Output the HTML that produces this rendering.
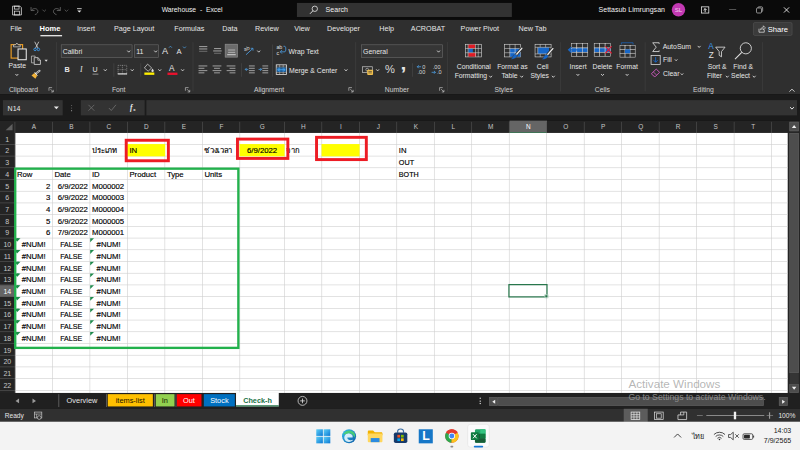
<!DOCTYPE html>
<html lang="en"><head><meta charset="utf-8"><title>Warehouse - Excel</title>
<style>
html,body{margin:0;padding:0;background:#0a0a0a;}
body{width:800px;height:450px;overflow:hidden;position:relative;}
#app{position:absolute;left:0;top:0;width:1368px;height:772px;transform:scale(0.585652);transform-origin:0 0;
 font-family:"Liberation Sans","Noto Sans CJK JP",sans-serif;font-size:12px;color:#e6e6e6;overflow:hidden;background:#0a0a0a;}
#app div,#app svg,#app span.a{position:absolute;box-sizing:border-box;}
#app svg{overflow:visible;}
.t{white-space:nowrap;}
.c{white-space:nowrap;color:#000;font-size:13.2px;height:20px;line-height:20px;-webkit-text-stroke:0.25px #000;}
</style></head>
<body>
<div id="app">
<div style="left:0px;top:0px;width:1366px;height:34px;background:#0a0a0a;"></div>
<svg style="left:20px;top:8.5px;" width="18" height="18" viewBox="0 0 18 18"><path d="M1.5 1.5h12.5l2.5 2.5v12.5h-15z" fill="none" stroke="#e8e8e8" stroke-width="1.3"/><rect x="4.5" y="1.5" width="8" height="5" fill="none" stroke="#e8e8e8" stroke-width="1.2"/><rect x="4.5" y="10" width="9" height="6.5" fill="none" stroke="#e8e8e8" stroke-width="1.2"/></svg>
<svg style="left:50px;top:9.5px;" width="18" height="16" viewBox="0 0 18 16"><path d="M3 2v6h6" fill="none" stroke="#6a6a6a" stroke-width="1.4"/><path d="M3.5 8c2-4 9-5 11 0 1 3-1 6-5 7" fill="none" stroke="#6a6a6a" stroke-width="1.4"/></svg>
<svg style="left:72px;top:15.5px;" width="8" height="5" viewBox="0 0 8 5"><path d="M0.5 0.5l3 3 3-3" fill="none" stroke="#6a6a6a" stroke-width="1.2"/></svg>
<svg style="left:88px;top:9.5px;" width="18" height="16" viewBox="0 0 18 16"><path d="M15 2v6h-6" fill="none" stroke="#6a6a6a" stroke-width="1.4"/><path d="M14.5 8c-2-4-9-5-11 0-1 3 1 6 5 7" fill="none" stroke="#6a6a6a" stroke-width="1.4"/></svg>
<svg style="left:110px;top:15.5px;" width="8" height="5" viewBox="0 0 8 5"><path d="M0.5 0.5l3 3 3-3" fill="none" stroke="#6a6a6a" stroke-width="1.2"/></svg>
<svg style="left:131px;top:14px;" width="9" height="9" viewBox="0 0 9 9"><path d="M0.5 0.8h8" stroke="#e8e8e8" stroke-width="1.4"/><path d="M1 3.8l3.5 3.6L8 3.8z" fill="#e8e8e8"/></svg>
<div class="t" style="left:276px;top:6px;height:20px;line-height:20px;font-size:11.6px;color:#f0f0f0;">Warehouse&nbsp; -&nbsp; Excel</div>
<div style="left:507px;top:5px;width:367px;height:24px;background:#323232;"></div>
<svg style="left:528px;top:9px;" width="16" height="16" viewBox="0 0 16 16"><circle cx="9.5" cy="6" r="4.6" fill="none" stroke="#f0f0f0" stroke-width="1.3"/><path d="M6.3 9.4l-5 5.2" stroke="#f0f0f0" stroke-width="1.5"/></svg>
<div class="t" style="left:556px;top:6.5px;height:20px;line-height:20px;font-size:12px;color:#f0f0f0;">Search</div>
<div class="t" style="left:1022px;top:6px;height:20px;line-height:20px;font-size:12px;color:#f0f0f0;">Settasub Limrungsan</div>
<div style="left:1147px;top:5px;width:23px;height:23px;background:#c239b3;border-radius:50%;"></div>
<div class="t" style="left:1147px;top:6.5px;height:20px;line-height:20px;font-size:10.5px;color:#f0cfea;width:23px;text-align:center;">SL</div>
<svg style="left:1197px;top:10.5px;" width="14" height="12" viewBox="0 0 14 12"><rect x="0.7" y="0.7" width="12.6" height="10.6" fill="none" stroke="#f0f0f0" stroke-width="1.3"/><path d="M7 9.8v-6M4.3 6.3L7 3.6l2.7 2.7" fill="none" stroke="#f0f0f0" stroke-width="1.6"/></svg>
<div style="left:1245px;top:16px;width:12px;height:1.3px;background:#8a8a8a;"></div>
<svg style="left:1291px;top:10.5px;" width="12" height="12" viewBox="0 0 12 12"><rect x="0.7" y="2.6" width="8.6" height="8.6" rx="1.8" fill="none" stroke="#b8b8b8" stroke-width="1.3"/><path d="M3 2.6v-0.3c0-.9.7-1.6 1.6-1.6h5c.9 0 1.6.7 1.6 1.6v5c0 .9-.7 1.6-1.6 1.6h-.3" fill="none" stroke="#b8b8b8" stroke-width="1.3"/></svg>
<svg style="left:1338px;top:11.5px;" width="10" height="10" viewBox="0 0 10 10"><path d="M0.6 0.6l8.8 8.8M9.4 0.6L0.6 9.4" stroke="#f0f0f0" stroke-width="1.5"/></svg>
<div style="left:0px;top:34px;width:1366px;height:127px;background:#2f2f2f;"></div>
<div class="t" style="left:17.5px;top:39px;height:20px;line-height:20px;font-size:12.3px;color:#e6e6e6;">File</div>
<div class="t" style="left:67.5px;top:39px;height:20px;line-height:20px;font-size:12.8px;color:#ffffff;font-weight:bold;">Home</div>
<div class="t" style="left:131.5px;top:39px;height:20px;line-height:20px;font-size:12.3px;color:#e6e6e6;">Insert</div>
<div class="t" style="left:194.5px;top:39px;height:20px;line-height:20px;font-size:12.3px;color:#e6e6e6;">Page Layout</div>
<div class="t" style="left:297.5px;top:39px;height:20px;line-height:20px;font-size:12.3px;color:#e6e6e6;">Formulas</div>
<div class="t" style="left:379.5px;top:39px;height:20px;line-height:20px;font-size:12.3px;color:#e6e6e6;">Data</div>
<div class="t" style="left:435.5px;top:39px;height:20px;line-height:20px;font-size:12.3px;color:#e6e6e6;">Review</div>
<div class="t" style="left:502.5px;top:39px;height:20px;line-height:20px;font-size:12.3px;color:#e6e6e6;">View</div>
<div class="t" style="left:558.5px;top:39px;height:20px;line-height:20px;font-size:12.3px;color:#e6e6e6;">Developer</div>
<div class="t" style="left:647.5px;top:39px;height:20px;line-height:20px;font-size:12.3px;color:#e6e6e6;">Help</div>
<div class="t" style="left:701.5px;top:39px;height:20px;line-height:20px;font-size:12.3px;color:#e6e6e6;">ACROBAT</div>
<div class="t" style="left:786.5px;top:39px;height:20px;line-height:20px;font-size:12.3px;color:#e6e6e6;">Power Pivot</div>
<div class="t" style="left:885.5px;top:39px;height:20px;line-height:20px;font-size:12.3px;color:#e6e6e6;">New Tab</div>
<div style="left:68.5px;top:59.5px;width:37.5px;height:2.5px;background:#ffffff;"></div>
<div style="left:1286px;top:38px;width:67px;height:23px;background:#3b3b3b;border:1px solid #555;border-radius:3px;"></div>
<svg style="left:1295px;top:43px;" width="13" height="13" viewBox="0 0 13 13"><path d="M1 6v6h9V8" fill="none" stroke="#e8e8e8" stroke-width="1.2"/><path d="M3.5 8c.5-3 2.5-4.5 5-4.5V1l3.5 3.7-3.5 3.6V6C6.5 6 4.8 6.5 3.5 8z" fill="none" stroke="#e8e8e8" stroke-width="1.1"/></svg>
<div class="t" style="left:1311px;top:39.5px;height:20px;line-height:20px;font-size:13px;color:#ffffff;">Share</div>
<div style="left:0px;top:161px;width:1366px;height:45px;background:#1b1b1b;"></div>
<div style="left:5px;top:171px;width:102px;height:26px;background:#333333;"></div>
<div class="t" style="left:13px;top:174.5px;height:20px;line-height:20px;font-size:12px;color:#e6e6e6;">N14</div>
<svg style="left:92px;top:182px;" width="9" height="6" viewBox="0 0 9 6"><path d="M0 0h8.5L4.25 4.6z" fill="#e8e8e8"/></svg>
<div style="left:121.7px;top:179.5px;width:1.7px;height:1.7px;background:#d8d8d8;"></div>
<div style="left:121.7px;top:183.7px;width:1.7px;height:1.7px;background:#d8d8d8;"></div>
<div style="left:121.7px;top:188px;width:1.7px;height:1.7px;background:#d8d8d8;"></div>
<div style="left:137.5px;top:171px;width:109px;height:26px;background:#333333;"></div>
<svg style="left:150px;top:178px;" width="12" height="12" viewBox="0 0 12 12"><path d="M1 1l10 10M11 1L1 11" stroke="#6d6d6d" stroke-width="1.4"/></svg>
<svg style="left:185px;top:178px;" width="14" height="12" viewBox="0 0 14 12"><path d="M1 6.5l4 4.2L13 1" fill="none" stroke="#6d6d6d" stroke-width="1.5"/></svg>
<div class="t" style="left:222px;top:173.5px;height:20px;line-height:20px;font-size:12.5px;color:#f0f0f0;font-family:&quot;Liberation Serif&quot;,serif;font-weight:bold;"><i>f</i></div>
<div class="t" style="left:227.5px;top:177px;height:20px;line-height:20px;font-size:7px;color:#f0f0f0;font-weight:bold;">x</div>
<div style="left:249.7px;top:171px;width:1111.5px;height:26px;background:#333333;"></div>
<svg style="left:1348px;top:181.5px;" width="9" height="6" viewBox="0 0 9 6"><path d="M1 1l3.3 3.3L7.6 1" fill="none" stroke="#f0f0f0" stroke-width="1.7"/></svg>
<svg style="left:18px;top:72px;" width="30" height="32" viewBox="0 0 30 32"><rect x="1" y="4.2" width="19.6" height="23" fill="none" stroke="#f2a024" stroke-width="1.9"/><path d="M5 8V4.6h3.4L10.8 1.4l2.4 3.2h3.4V8z" fill="#2f2f2f" stroke="#cfcfcf" stroke-width="1.3"/><rect x="12.8" y="11.6" width="14" height="18.4" fill="#2f2f2f" stroke="#f2f2f2" stroke-width="1.7"/></svg>
<div class="t" style="left:-30.5px;top:102px;height:20px;line-height:20px;font-size:11.6px;color:#e6e6e6;width:120px;text-align:center;">Paste</div>
<svg style="left:26.0px;top:126.46px;" width="5.6" height="4.08" viewBox="0 0 5.6 4.08"><path d="M0.4 0.4l2.4 2.68 2.4 -2.68" fill="none" stroke="#dcdcdc" stroke-width="1.5"/></svg>
<svg style="left:56.5px;top:71px;" width="12" height="17" viewBox="0 0 12 17"><path d="M2.3 0.3L7.8 11M9.2 0.3L3.7 11" stroke="#e6e6e6" stroke-width="1.25"/><circle cx="2.9" cy="13.4" r="2.1" fill="none" stroke="#3b9cf0" stroke-width="1.5"/><circle cx="8.6" cy="13.4" r="2.1" fill="none" stroke="#3b9cf0" stroke-width="1.5"/></svg>
<svg style="left:53px;top:95px;" width="17" height="16" viewBox="0 0 17 16"><path d="M7 2.2V0.7H0.7v11.6h4" fill="none" stroke="#cfcfcf" stroke-width="1.2"/><path d="M5.4 3.4h6.4l4.2 4.2v7.4H5.4z" fill="#2f2f2f" stroke="#e6e6e6" stroke-width="1.3"/><path d="M11.6 3.6v4.2h4.2" fill="none" stroke="#e6e6e6" stroke-width="1.1"/></svg>
<svg style="left:76px;top:102.3px;" width="6" height="4" viewBox="0 0 6 4"><path d="M0 0h5.6L2.8 3.4z" fill="#e0e0e0"/></svg>
<svg style="left:53px;top:119px;" width="17" height="17" viewBox="0 0 17 17"><path d="M8.4 6.6L14.6 2" stroke="#e0e0e0" stroke-width="3.2" stroke-linecap="round"/><path d="M8.8 6.2L14.2 2.3" stroke="#2f2f2f" stroke-width="1.1" stroke-linecap="round"/><path d="M6.2 4.6l4.6 5.6" stroke="#f2f2f2" stroke-width="1.6"/><path d="M5.6 5.6L0.8 9.8l6.6 5.6 3-5.2z" fill="#f2b33a"/></svg>
<div class="t" style="left:-20px;top:143px;height:20px;line-height:20px;font-size:11.6px;color:#cfcfcf;width:120px;text-align:center;">Clipboard</div>
<svg style="left:82.5px;top:149.0px;" width="9" height="9" viewBox="0 0 9 9"><path d="M0.6 6V0.6H6" fill="none" stroke="#c8c8c8" stroke-width="1.1"/><path d="M3.2 3.2l4.6 4.6M8 4.4V8H4.4" fill="none" stroke="#c8c8c8" stroke-width="1.1"/></svg>
<div style="left:95.5px;top:72px;width:1px;height:84px;background:#434343;"></div>
<div style="left:103.7px;top:76px;width:122.5px;height:22.5px;background:#363636;border:1px solid #6a6a6a;"></div>
<div class="t" style="left:107px;top:78px;height:20px;line-height:20px;font-size:11.8px;color:#e6e6e6;">Calibri</div>
<svg style="left:217.0px;top:85.96px;" width="5.6" height="4.08" viewBox="0 0 5.6 4.08"><path d="M0.4 0.4l2.4 2.68 2.4 -2.68" fill="none" stroke="#dcdcdc" stroke-width="1.5"/></svg>
<div style="left:229.2px;top:76px;width:42px;height:22.5px;background:#363636;border:1px solid #6a6a6a;"></div>
<div class="t" style="left:232.6px;top:78px;height:20px;line-height:20px;font-size:12px;color:#e6e6e6;">11</div>
<svg style="left:262.7px;top:85.96px;" width="5.6" height="4.08" viewBox="0 0 5.6 4.08"><path d="M0.4 0.4l2.4 2.68 2.4 -2.68" fill="none" stroke="#dcdcdc" stroke-width="1.5"/></svg>
<div class="t" style="left:276.5px;top:77px;height:20px;line-height:20px;font-size:15.5px;color:#e6e6e6;">A</div>
<svg style="left:288px;top:78px;" width="6" height="4" viewBox="0 0 6 4"><path d="M0.5 3.5L3 0.8l2.5 2.7" fill="none" stroke="#4ea3ea" stroke-width="1.2"/></svg>
<div class="t" style="left:301.5px;top:78px;height:20px;line-height:20px;font-size:13px;color:#e6e6e6;">A</div>
<svg style="left:311.5px;top:79px;" width="6" height="4" viewBox="0 0 6 4"><path d="M0.5 0.5L3 3.2l2.5-2.7" fill="none" stroke="#4ea3ea" stroke-width="1.2"/></svg>
<div class="t" style="left:110px;top:109px;height:20px;line-height:20px;font-size:12.5px;color:#e6e6e6;font-weight:bold;">B</div>
<div class="t" style="left:136.5px;top:109px;height:20px;line-height:20px;font-size:13px;color:#e6e6e6;font-family:&quot;Liberation Serif&quot;,serif;"><i>I</i></div>
<div class="t" style="left:158px;top:108.5px;height:20px;line-height:20px;font-size:12px;color:#e6e6e6;">U</div>
<div style="left:157.5px;top:126px;width:10px;height:1.2px;background:#d8d8d8;"></div>
<svg style="left:177.29999999999998px;top:118.46px;" width="5.6" height="4.08" viewBox="0 0 5.6 4.08"><path d="M0.4 0.4l2.4 2.68 2.4 -2.68" fill="none" stroke="#dcdcdc" stroke-width="1.5"/></svg>
<div style="left:194.2px;top:108px;width:1px;height:23px;background:#4a4a4a;"></div>
<svg style="left:200.5px;top:110.5px;" width="16" height="16" viewBox="0 0 16 16"><rect x="0.6" y="0.6" width="14.8" height="14.8" fill="none" stroke="#9a9a9a" stroke-width="1" stroke-dasharray="2 1.2"/><path d="M0 8h16M8 0v16" stroke="#9a9a9a" stroke-width="1" stroke-dasharray="2 1.2"/><path d="M0 15.2h16" stroke="#f0f0f0" stroke-width="1.8"/></svg>
<svg style="left:223.39999999999998px;top:118.46px;" width="5.6" height="4.08" viewBox="0 0 5.6 4.08"><path d="M0.4 0.4l2.4 2.68 2.4 -2.68" fill="none" stroke="#dcdcdc" stroke-width="1.5"/></svg>
<div style="left:240px;top:108px;width:1px;height:23px;background:#4a4a4a;"></div>
<svg style="left:245px;top:107px;" width="20" height="22" viewBox="0 0 20 22"><path d="M7 2.5l7 6.5-6 5.5-6.5-5.5z" fill="none" stroke="#e0e0e0" stroke-width="1.2"/><path d="M15.5 10c1 1.5 2 2.8 2 3.8a2 2 0 0 1-4 0c0-1 1-2.3 2-3.8z" fill="#e0e0e0"/><rect x="1.5" y="16.8" width="17" height="4" fill="#ffef00"/></svg>
<svg style="left:269.5px;top:118.46px;" width="5.6" height="4.08" viewBox="0 0 5.6 4.08"><path d="M0.4 0.4l2.4 2.68 2.4 -2.68" fill="none" stroke="#dcdcdc" stroke-width="1.5"/></svg>
<div class="t" style="left:288.5px;top:106px;height:20px;line-height:20px;font-size:14px;color:#e6e6e6;">A</div>
<div style="left:285.5px;top:123.8px;width:17.5px;height:4px;background:#e8112d;"></div>
<svg style="left:308.8px;top:118.46px;" width="5.6" height="4.08" viewBox="0 0 5.6 4.08"><path d="M0.4 0.4l2.4 2.68 2.4 -2.68" fill="none" stroke="#dcdcdc" stroke-width="1.5"/></svg>
<div class="t" style="left:142.7px;top:143px;height:20px;line-height:20px;font-size:11.6px;color:#cfcfcf;width:120px;text-align:center;">Font</div>
<svg style="left:315.5px;top:149.0px;" width="9" height="9" viewBox="0 0 9 9"><path d="M0.6 6V0.6H6" fill="none" stroke="#c8c8c8" stroke-width="1.1"/><path d="M3.2 3.2l4.6 4.6M8 4.4V8H4.4" fill="none" stroke="#c8c8c8" stroke-width="1.1"/></svg>
<div style="left:328.7px;top:72px;width:1px;height:84px;background:#434343;"></div>
<div style="left:384.2px;top:74.7px;width:22.2px;height:23.5px;background:#6b6b6b;border:1px solid #8a8a8a;"></div>
<svg style="left:339.5px;top:78.5px;" width="15" height="16" viewBox="0 0 15 16"><path d="M0 0.6h14M0 4.6h14" stroke="#d8d8d8" stroke-width="1.2"/><path d="M0 8.6h14" stroke="#8a8a8a" stroke-width="1.2"/></svg>
<svg style="left:363.5px;top:79.5px;" width="15" height="16" viewBox="0 0 15 16"><path d="M1.5 3h12M0 7h14.5" stroke="#d8d8d8" stroke-width="1.2"/><path d="M1.5 11h12" stroke="#8a8a8a" stroke-width="1.2"/></svg>
<svg style="left:388px;top:78px;" width="15" height="16" viewBox="0 0 15 16"><path d="M1.5 7.4h12M1.5 11.4h12" stroke="#d0d0d0" stroke-width="1.2"/><path d="M0 15.4h14.5" stroke="#f0f0f0" stroke-width="1.3"/></svg>
<svg style="left:417px;top:77px;" width="17" height="18" viewBox="0 0 17 18"><text x="0" y="9" font-size="9" fill="#d8d8d8" font-family="Liberation Sans,sans-serif" transform="rotate(-20 4 8)">ab</text><path d="M3 16.5L14.5 6" stroke="#4ea3ea" stroke-width="1.4"/><path d="M11 5.5h4v4" fill="none" stroke="#4ea3ea" stroke-width="1.3"/></svg>
<svg style="left:439.0px;top:86.46px;" width="5.6" height="4.08" viewBox="0 0 5.6 4.08"><path d="M0.4 0.4l2.4 2.68 2.4 -2.68" fill="none" stroke="#dcdcdc" stroke-width="1.5"/></svg>
<div style="left:465.3px;top:76px;width:1px;height:55px;background:#4a4a4a;"></div>
<svg style="left:472px;top:76px;" width="17" height="20" viewBox="0 0 17 20"><text x="0" y="8" font-size="9" fill="#e0e0e0" font-family="Liberation Sans,sans-serif">ab</text><text x="0" y="17.5" font-size="9" fill="#e0e0e0" font-family="Liberation Sans,sans-serif">c</text><path d="M12 3h2.5c2 0 2 9.5 0 9.5H7" fill="none" stroke="#4ea3ea" stroke-width="1.3"/><path d="M9.5 9.5l-3 3 3 3" fill="none" stroke="#4ea3ea" stroke-width="1.3"/></svg>
<div class="t" style="left:492.5px;top:78px;height:20px;line-height:20px;font-size:11.6px;color:#e6e6e6;">Wrap Text</div>
<svg style="left:339px;top:111.7px;" width="15" height="13" viewBox="0 0 15 13"><path d="M0 0.6h15M0 4.6h10M0 8.6h15M0 12.4h10" stroke="#d0d0d0" stroke-width="1.2"/></svg>
<svg style="left:363px;top:111.7px;" width="15" height="13" viewBox="0 0 15 13"><path d="M0 0.6h15M2.5 4.6h10M0 8.6h15M2.5 12.4h10" stroke="#d0d0d0" stroke-width="1.2"/></svg>
<svg style="left:387px;top:111.7px;" width="15" height="13" viewBox="0 0 15 13"><path d="M0 0.6h15M5 4.6h10M0 8.6h15M5 12.4h10" stroke="#d0d0d0" stroke-width="1.2"/></svg>
<div style="left:412px;top:108px;width:1px;height:23px;background:#4a4a4a;"></div>
<svg style="left:417.5px;top:111.7px;" width="17" height="13" viewBox="0 0 17 13"><path d="M7 0.6h10M7 4.6h10M7 8.6h10M7 12.4h10" stroke="#d0d0d0" stroke-width="1.2"/><path d="M6 6.5H0.8M3.2 4L0.8 6.5l2.4 2.5" fill="none" stroke="#4ea3ea" stroke-width="1.3"/></svg>
<svg style="left:441px;top:111.7px;" width="17" height="13" viewBox="0 0 17 13"><path d="M7 0.6h10M7 4.6h10M7 8.6h10M7 12.4h10" stroke="#d0d0d0" stroke-width="1.2"/><path d="M0.5 6.5h5.3M3.4 4l2.4 2.5-2.4 2.5" fill="none" stroke="#4ea3ea" stroke-width="1.3"/></svg>
<svg style="left:471px;top:109.5px;" width="19" height="18" viewBox="0 0 19 18"><rect x="0.7" y="0.7" width="17.6" height="16.6" fill="none" stroke="#e0e0e0" stroke-width="1.4"/><path d="M0.7 4.6h17.6M0.7 13.4h17.6M6.5 0.7v3.9M12.5 0.7v3.9M6.5 13.4v3.9M12.5 13.4v3.9" stroke="#c8c8c8" stroke-width="1"/><rect x="1.4" y="5.2" width="16.2" height="7.6" fill="#1f5e98"/><path d="M3 9h13M5.5 6.8L3.2 9l2.3 2.2M13.5 6.8l2.3 2.2-2.3 2.2" fill="none" stroke="#4eb0ff" stroke-width="1.2"/><path d="M6.5 5.2v7.6M12.5 5.2v7.6" stroke="#4eb0ff" stroke-width="0.9"/></svg>
<div class="t" style="left:493.5px;top:109.5px;height:20px;line-height:20px;font-size:11.7px;color:#e6e6e6;">Merge &amp; Center</div>
<svg style="left:587.6px;top:118.46px;" width="5.6" height="4.08" viewBox="0 0 5.6 4.08"><path d="M0.4 0.4l2.4 2.68 2.4 -2.68" fill="none" stroke="#dcdcdc" stroke-width="1.5"/></svg>
<div class="t" style="left:399.5px;top:143px;height:20px;line-height:20px;font-size:11.6px;color:#cfcfcf;width:120px;text-align:center;">Alignment</div>
<svg style="left:595.3px;top:149.0px;" width="9" height="9" viewBox="0 0 9 9"><path d="M0.6 6V0.6H6" fill="none" stroke="#c8c8c8" stroke-width="1.1"/><path d="M3.2 3.2l4.6 4.6M8 4.4V8H4.4" fill="none" stroke="#c8c8c8" stroke-width="1.1"/></svg>
<div style="left:607px;top:72px;width:1px;height:84px;background:#434343;"></div>
<div style="left:616.8px;top:76px;width:139.6px;height:22.5px;background:#363636;border:1px solid #6a6a6a;"></div>
<div class="t" style="left:620px;top:78px;height:20px;line-height:20px;font-size:11.8px;color:#e6e6e6;">General</div>
<svg style="left:746.4000000000001px;top:85.96px;" width="5.6" height="4.08" viewBox="0 0 5.6 4.08"><path d="M0.4 0.4l2.4 2.68 2.4 -2.68" fill="none" stroke="#dcdcdc" stroke-width="1.5"/></svg>
<svg style="left:617.5px;top:112px;" width="21" height="17" viewBox="0 0 21 17"><rect x="0.7" y="2" width="17" height="10" fill="none" stroke="#c8c8c8" stroke-width="1.2"/><circle cx="9" cy="7" r="2.4" fill="none" stroke="#c8c8c8" stroke-width="1.1"/><rect x="9" y="7" width="10" height="9" rx="1.5" fill="#f2c14e"/><path d="M11 10h6M11 12.5h6" stroke="#2f2f2f" stroke-width="1"/></svg>
<svg style="left:641.8000000000001px;top:118.46px;" width="5.6" height="4.08" viewBox="0 0 5.6 4.08"><path d="M0.4 0.4l2.4 2.68 2.4 -2.68" fill="none" stroke="#dcdcdc" stroke-width="1.5"/></svg>
<div class="t" style="left:657.5px;top:108.5px;height:20px;line-height:20px;font-size:19px;color:#dadada;">%</div>
<div class="t" style="left:684px;top:116.5px;height:20px;line-height:20px;font-size:36px;color:#e6e6e6;font-weight:bold;">&#x2019;</div>
<div style="left:704.3px;top:108px;width:1px;height:23px;background:#4a4a4a;"></div>
<svg style="left:711px;top:109.5px;" width="20" height="18" viewBox="0 0 20 18"><path d="M8 4H1.5M4 1.5L1.5 4 4 6.5" fill="none" stroke="#4ea3ea" stroke-width="1.3"/><text x="10" y="8" font-size="9.5" fill="#d8d8d8" font-family="Liberation Sans,sans-serif">0</text><text x="2" y="17" font-size="9.5" fill="#d8d8d8" font-family="Liberation Sans,sans-serif">.00</text></svg>
<svg style="left:736px;top:109.5px;" width="20" height="18" viewBox="0 0 20 18"><text x="3" y="8" font-size="9.5" fill="#d8d8d8" font-family="Liberation Sans,sans-serif">.00</text><path d="M1 13.5h6.5M5 11l2.5 2.5L5 16" fill="none" stroke="#4ea3ea" stroke-width="1.3"/><text x="10" y="17" font-size="9.5" fill="#d8d8d8" font-family="Liberation Sans,sans-serif">.0</text></svg>
<div class="t" style="left:617.7px;top:143px;height:20px;line-height:20px;font-size:11.6px;color:#cfcfcf;width:120px;text-align:center;">Number</div>
<svg style="left:750.2px;top:149.0px;" width="9" height="9" viewBox="0 0 9 9"><path d="M0.6 6V0.6H6" fill="none" stroke="#c8c8c8" stroke-width="1.1"/><path d="M3.2 3.2l4.6 4.6M8 4.4V8H4.4" fill="none" stroke="#c8c8c8" stroke-width="1.1"/></svg>
<div style="left:764.1px;top:72px;width:1px;height:84px;background:#434343;"></div>
<svg style="left:794px;top:74.7px;" width="29" height="23" viewBox="0 0 29 23"><rect x="0.6" y="0.6" width="27.4" height="21.6" fill="#2f2f2f" stroke="#dcdcdc" stroke-width="1"/><rect x="5.6" y="1.2" width="11.8" height="6.2" fill="#e01b24"/><rect x="5.6" y="8.2" width="7.8" height="6.4" fill="#1767c8"/><rect x="5.6" y="15.4" width="13.4" height="6.2" fill="#e01b24"/><path d="M0.6 7.8h27.4M0.6 15h27.4M5.2 0.6v21.6M18 0.6v21.6M22.6 0.6v21.6" stroke="#dcdcdc" stroke-width="0.9"/></svg>
<div class="t" style="left:749px;top:102.5px;height:20px;line-height:20px;font-size:11.6px;color:#e6e6e6;width:120px;text-align:center;">Conditional</div>
<div class="t" style="left:744px;top:119.30000000000001px;height:20px;line-height:20px;font-size:11.6px;color:#e6e6e6;width:120px;text-align:center;">Formatting</div>
<svg style="left:835.2px;top:129.46px;" width="5.6" height="4.08" viewBox="0 0 5.6 4.08"><path d="M0.4 0.4l2.4 2.68 2.4 -2.68" fill="none" stroke="#dcdcdc" stroke-width="1.5"/></svg>
<svg style="left:861px;top:74.7px;" width="31" height="29" viewBox="0 0 31 29"><rect x="0.6" y="0.6" width="27.4" height="21.6" fill="#2f2f2f" stroke="#dcdcdc" stroke-width="1"/><rect x="9.6" y="8" width="18" height="13.8" fill="#1767c8"/><path d="M0.6 7.8h27.4M0.6 15h27.4M9.4 0.6v21.6M18.6 0.6v21.6" stroke="#dcdcdc" stroke-width="0.9"/><path d="M30 7.5L20.5 18.5" stroke="#2f2f2f" stroke-width="5"/><path d="M30 7.5L20.5 18.5" stroke="#ececec" stroke-width="2.3" stroke-linecap="round"/><path d="M20.5 18.5m2 1.4c-1 4-5.6 6.6-11.5 6.2 2.8-1.6 3-4 4.2-6.2 1.5-2.4 5.2-3 7.3 0z" fill="#1767c8" stroke="#2f2f2f" stroke-width="0.7"/></svg>
<div class="t" style="left:815px;top:102.5px;height:20px;line-height:20px;font-size:11.6px;color:#e6e6e6;width:120px;text-align:center;">Format as</div>
<div class="t" style="left:810px;top:119.30000000000001px;height:20px;line-height:20px;font-size:11.6px;color:#e6e6e6;width:120px;text-align:center;">Table</div>
<svg style="left:887.7px;top:129.46px;" width="5.6" height="4.08" viewBox="0 0 5.6 4.08"><path d="M0.4 0.4l2.4 2.68 2.4 -2.68" fill="none" stroke="#dcdcdc" stroke-width="1.5"/></svg>
<svg style="left:912.7px;top:74.7px;" width="32" height="29" viewBox="0 0 32 29"><rect x="0.6" y="0.6" width="27.4" height="21.6" fill="#2f2f2f" stroke="#dcdcdc" stroke-width="1"/><rect x="5.4" y="6" width="19" height="11" fill="#1767c8"/><path d="M0.6 5.8h27.4M0.6 17h27.4M9.4 0.6v5.2M18.6 0.6v5.2M9.4 17v5.2M18.6 17v5.2M5.2 5.8v11.2" stroke="#dcdcdc" stroke-width="0.9"/><path d="M31 8L21.5 19" stroke="#2f2f2f" stroke-width="5"/><path d="M31 8L21.5 19" stroke="#ececec" stroke-width="2.3" stroke-linecap="round"/><path d="M21.5 19m2 1.4c-1 4-5.6 6.6-11.5 6.2 2.8-1.6 3-4 4.2-6.2 1.5-2.4 5.2-3 7.3 0z" fill="#1767c8" stroke="#2f2f2f" stroke-width="0.7"/></svg>
<div class="t" style="left:866.5px;top:102.5px;height:20px;line-height:20px;font-size:11.6px;color:#e6e6e6;width:120px;text-align:center;">Cell</div>
<div class="t" style="left:861.5px;top:119.30000000000001px;height:20px;line-height:20px;font-size:11.6px;color:#e6e6e6;width:120px;text-align:center;">Styles</div>
<svg style="left:942.2px;top:129.46px;" width="5.6" height="4.08" viewBox="0 0 5.6 4.08"><path d="M0.4 0.4l2.4 2.68 2.4 -2.68" fill="none" stroke="#dcdcdc" stroke-width="1.5"/></svg>
<div class="t" style="left:800px;top:143px;height:20px;line-height:20px;font-size:11.6px;color:#cfcfcf;width:120px;text-align:center;">Styles</div>
<div style="left:957px;top:72px;width:1px;height:84px;background:#434343;"></div>
<svg style="left:975px;top:74px;" width="29" height="23" viewBox="0 0 29 23"><rect x="0.6" y="0.6" width="9.3" height="7.3" fill="#2f2f2f" stroke="#d8d8d8" stroke-width="0.9"/><rect x="9.9" y="0.6" width="9.3" height="7.3" fill="#2f2f2f" stroke="#d8d8d8" stroke-width="0.9"/><rect x="19.3" y="0.6" width="9.3" height="7.3" fill="#2f2f2f" stroke="#d8d8d8" stroke-width="0.9"/><rect x="0.6" y="7.9" width="9.3" height="7.3" fill="#1767c8" stroke="#d8d8d8" stroke-width="0.9"/><rect x="9.9" y="7.9" width="9.3" height="7.3" fill="#1767c8" stroke="#d8d8d8" stroke-width="0.9"/><rect x="19.3" y="7.9" width="9.3" height="7.3" fill="#1767c8" stroke="#d8d8d8" stroke-width="0.9"/><rect x="0.6" y="15.3" width="9.3" height="7.3" fill="#2f2f2f" stroke="#d8d8d8" stroke-width="0.9"/><rect x="9.9" y="15.3" width="9.3" height="7.3" fill="#2f2f2f" stroke="#d8d8d8" stroke-width="0.9"/><rect x="19.3" y="15.3" width="9.3" height="7.3" fill="#2f2f2f" stroke="#d8d8d8" stroke-width="0.9"/><path d="M14 11H-4M1 6.5L-4 11l5 4.5" fill="none" stroke="#1767c8" stroke-width="2.2"/></svg>
<svg style="left:1014px;top:74px;" width="29" height="23" viewBox="0 0 29 23"><rect x="0.6" y="0.6" width="9.3" height="7.3" fill="#2f2f2f" stroke="#d8d8d8" stroke-width="0.9"/><rect x="9.9" y="0.6" width="9.3" height="7.3" fill="#2f2f2f" stroke="#d8d8d8" stroke-width="0.9"/><rect x="19.3" y="0.6" width="9.3" height="7.3" fill="#2f2f2f" stroke="#d8d8d8" stroke-width="0.9"/><rect x="0.6" y="7.9" width="9.3" height="7.3" fill="#1767c8" stroke="#d8d8d8" stroke-width="0.9"/><rect x="9.9" y="7.9" width="9.3" height="7.3" fill="#1767c8" stroke="#d8d8d8" stroke-width="0.9"/><rect x="19.3" y="7.9" width="9.3" height="7.3" fill="#1767c8" stroke="#d8d8d8" stroke-width="0.9"/><rect x="0.6" y="15.3" width="9.3" height="7.3" fill="#2f2f2f" stroke="#d8d8d8" stroke-width="0.9"/><rect x="9.9" y="15.3" width="9.3" height="7.3" fill="#2f2f2f" stroke="#d8d8d8" stroke-width="0.9"/><rect x="19.3" y="15.3" width="9.3" height="7.3" fill="#2f2f2f" stroke="#d8d8d8" stroke-width="0.9"/><path d="M19.5 5l11 12M30.5 5L19.5 17" stroke="#e8112d" stroke-width="1.8"/></svg>
<svg style="left:1058px;top:77px;" width="27" height="21" viewBox="0 0 27 21"><rect x="0.6" y="0.6" width="8.7" height="6.7" fill="#2f2f2f" stroke="#d8d8d8" stroke-width="0.9"/><rect x="9.3" y="0.6" width="8.7" height="6.7" fill="#2f2f2f" stroke="#d8d8d8" stroke-width="0.9"/><rect x="17.9" y="0.6" width="8.7" height="6.7" fill="#2f2f2f" stroke="#d8d8d8" stroke-width="0.9"/><rect x="0.6" y="7.3" width="8.7" height="6.7" fill="#2f2f2f" stroke="#d8d8d8" stroke-width="0.9"/><rect x="9.3" y="7.3" width="8.7" height="6.7" fill="#2f2f2f" stroke="#d8d8d8" stroke-width="0.9"/><rect x="17.9" y="7.3" width="8.7" height="6.7" fill="#2f2f2f" stroke="#d8d8d8" stroke-width="0.9"/><rect x="0.6" y="13.9" width="8.7" height="6.7" fill="#2f2f2f" stroke="#d8d8d8" stroke-width="0.9"/><rect x="9.3" y="13.9" width="8.7" height="6.7" fill="#2f2f2f" stroke="#d8d8d8" stroke-width="0.9"/><rect x="17.9" y="13.9" width="8.7" height="6.7" fill="#2f2f2f" stroke="#d8d8d8" stroke-width="0.9"/><rect x="9.2" y="7.3" width="8.7" height="6.6" fill="#1767c8"/><path d="M3 -1v-3h20v3" fill="none" stroke="#1767c8" stroke-width="1.2"/></svg>
<div class="t" style="left:927px;top:102.5px;height:20px;line-height:20px;font-size:11.6px;color:#e6e6e6;width:120px;text-align:center;">Insert</div>
<svg style="left:984.2px;top:126.46px;" width="5.6" height="4.08" viewBox="0 0 5.6 4.08"><path d="M0.4 0.4l2.4 2.68 2.4 -2.68" fill="none" stroke="#dcdcdc" stroke-width="1.5"/></svg>
<div class="t" style="left:968.5999999999999px;top:102.5px;height:20px;line-height:20px;font-size:11.6px;color:#e6e6e6;width:120px;text-align:center;">Delete</div>
<svg style="left:1025.8px;top:126.46px;" width="5.6" height="4.08" viewBox="0 0 5.6 4.08"><path d="M0.4 0.4l2.4 2.68 2.4 -2.68" fill="none" stroke="#dcdcdc" stroke-width="1.5"/></svg>
<div class="t" style="left:1010.8px;top:102.5px;height:20px;line-height:20px;font-size:11.6px;color:#e6e6e6;width:120px;text-align:center;">Format</div>
<svg style="left:1068.0px;top:126.46px;" width="5.6" height="4.08" viewBox="0 0 5.6 4.08"><path d="M0.4 0.4l2.4 2.68 2.4 -2.68" fill="none" stroke="#dcdcdc" stroke-width="1.5"/></svg>
<div class="t" style="left:968.5999999999999px;top:143px;height:20px;line-height:20px;font-size:11.6px;color:#cfcfcf;width:120px;text-align:center;">Cells</div>
<div style="left:1100.7px;top:72px;width:1px;height:84px;background:#434343;"></div>
<svg style="left:1112.5px;top:71.5px;" width="14" height="17" viewBox="0 0 14 17"><path d="M12.5 3V1H1.5l6 7.5-6 7.5h11v-2" fill="none" stroke="#e0e0e0" stroke-width="1.4"/></svg>
<div class="t" style="left:1131.5px;top:69px;height:20px;line-height:20px;font-size:11.8px;color:#e6e6e6;">AutoSum</div>
<svg style="left:1191.2px;top:78.46px;" width="5.6" height="4.08" viewBox="0 0 5.6 4.08"><path d="M0.4 0.4l2.4 2.68 2.4 -2.68" fill="none" stroke="#dcdcdc" stroke-width="1.5"/></svg>
<svg style="left:1111px;top:93.5px;" width="17" height="17" viewBox="0 0 17 17"><rect x="0.7" y="0.7" width="15.6" height="15.6" fill="none" stroke="#e0e0e0" stroke-width="1.3"/><path d="M8.5 3.5v8.5M5 8.8l3.5 3.5L12 8.8" fill="none" stroke="#1767c8" stroke-width="1.6"/></svg>
<div class="t" style="left:1132px;top:91.5px;height:20px;line-height:20px;font-size:11.8px;color:#e6e6e6;">Fill</div>
<svg style="left:1151.5px;top:101.125px;" width="5" height="3.75" viewBox="0 0 5 3.75"><path d="M0.4 0.4l2.1 2.35 2.1 -2.35" fill="none" stroke="#dcdcdc" stroke-width="1.5"/></svg>
<svg style="left:1111px;top:117px;" width="17" height="15" viewBox="0 0 17 15"><path d="M6 13.5L1.2 9 9.5 1l5.8 5.5-7.3 7z" fill="none" stroke="#d65cc6" stroke-width="1.5"/><path d="M4.5 5.8l5.8 5.5" stroke="#d65cc6" stroke-width="1.3"/></svg>
<div class="t" style="left:1132px;top:115px;height:20px;line-height:20px;font-size:11.8px;color:#e6e6e6;">Clear</div>
<svg style="left:1162.0px;top:124.625px;" width="5" height="3.75" viewBox="0 0 5 3.75"><path d="M0.4 0.4l2.1 2.35 2.1 -2.35" fill="none" stroke="#dcdcdc" stroke-width="1.5"/></svg>
<svg style="left:1209px;top:72px;" width="32" height="30" viewBox="0 0 32 30"><text x="0.5" y="11.5" font-size="14" fill="#3b9cf0" font-family="Liberation Sans,sans-serif">A</text><text x="1" y="27.5" font-size="14" fill="#e0e0e0" font-family="Liberation Sans,sans-serif">Z</text><path d="M13 8.5h16l-6 7.5v9l-4-2.5V16z" fill="none" stroke="#e0e0e0" stroke-width="1.4"/></svg>
<div class="t" style="left:1164.5px;top:102.5px;height:20px;line-height:20px;font-size:11.6px;color:#e6e6e6;width:120px;text-align:center;">Sort &amp;</div>
<div class="t" style="left:1160px;top:119.30000000000001px;height:20px;line-height:20px;font-size:11.6px;color:#e6e6e6;width:120px;text-align:center;">Filter</div>
<svg style="left:1238.7px;top:129.46px;" width="5.6" height="4.08" viewBox="0 0 5.6 4.08"><path d="M0.4 0.4l2.4 2.68 2.4 -2.68" fill="none" stroke="#dcdcdc" stroke-width="1.5"/></svg>
<svg style="left:1253px;top:71px;" width="33" height="32" viewBox="0 0 33 32"><circle cx="20.5" cy="11.5" r="9.5" fill="none" stroke="#e0e0e0" stroke-width="1.5"/><path d="M13.5 18.5L2 30" stroke="#e0e0e0" stroke-width="1.8"/></svg>
<div class="t" style="left:1209px;top:102.5px;height:20px;line-height:20px;font-size:11.6px;color:#e6e6e6;width:120px;text-align:center;">Find &amp;</div>
<div class="t" style="left:1204.5px;top:119.30000000000001px;height:20px;line-height:20px;font-size:11.6px;color:#e6e6e6;width:120px;text-align:center;">Select</div>
<svg style="left:1285.2px;top:129.46px;" width="5.6" height="4.08" viewBox="0 0 5.6 4.08"><path d="M0.4 0.4l2.4 2.68 2.4 -2.68" fill="none" stroke="#dcdcdc" stroke-width="1.5"/></svg>
<div class="t" style="left:1141.2px;top:143px;height:20px;line-height:20px;font-size:11.6px;color:#cfcfcf;width:120px;text-align:center;">Editing</div>
<div style="left:1301px;top:72px;width:1px;height:84px;background:#434343;"></div>
<svg style="left:1347px;top:151px;" width="11" height="6.5" viewBox="0 0 11 6.5"><path d="M1 5.5l4.3-4.3 4.3 4.3" fill="none" stroke="#e0e0e0" stroke-width="1.5"/></svg>
<div style="left:0px;top:206px;width:1366px;height:465px;background:#242424;"></div>
<div style="left:26px;top:227px;width:1319px;height:444px;background:#ffffff;"></div>
<svg style="left:9px;top:211px;" width="13" height="12" viewBox="0 0 13 12"><path d="M12.5 0.5v11h-12z" fill="#5f5f5f"/></svg>
<div class="t" style="left:26px;top:206.5px;height:20px;line-height:20px;font-size:11px;color:#c6c6c6;width:64px;text-align:center;">A</div>
<div style="left:89px;top:208px;width:1px;height:19px;background:#555555;"></div>
<div class="t" style="left:90px;top:206.5px;height:20px;line-height:20px;font-size:11px;color:#c6c6c6;width:64px;text-align:center;">B</div>
<div style="left:153px;top:208px;width:1px;height:19px;background:#555555;"></div>
<div class="t" style="left:154px;top:206.5px;height:20px;line-height:20px;font-size:11px;color:#c6c6c6;width:64px;text-align:center;">C</div>
<div style="left:217px;top:208px;width:1px;height:19px;background:#555555;"></div>
<div class="t" style="left:218px;top:206.5px;height:20px;line-height:20px;font-size:11px;color:#c6c6c6;width:64px;text-align:center;">D</div>
<div style="left:281px;top:208px;width:1px;height:19px;background:#555555;"></div>
<div class="t" style="left:282px;top:206.5px;height:20px;line-height:20px;font-size:11px;color:#c6c6c6;width:64px;text-align:center;">E</div>
<div style="left:345px;top:208px;width:1px;height:19px;background:#555555;"></div>
<div class="t" style="left:346px;top:206.5px;height:20px;line-height:20px;font-size:11px;color:#c6c6c6;width:64px;text-align:center;">F</div>
<div style="left:409px;top:208px;width:1px;height:19px;background:#555555;"></div>
<div class="t" style="left:410px;top:206.5px;height:20px;line-height:20px;font-size:11px;color:#c6c6c6;width:76px;text-align:center;">G</div>
<div style="left:485px;top:208px;width:1px;height:19px;background:#555555;"></div>
<div class="t" style="left:486px;top:206.5px;height:20px;line-height:20px;font-size:11px;color:#c6c6c6;width:64px;text-align:center;">H</div>
<div style="left:549px;top:208px;width:1px;height:19px;background:#555555;"></div>
<div class="t" style="left:550px;top:206.5px;height:20px;line-height:20px;font-size:11px;color:#c6c6c6;width:64px;text-align:center;">I</div>
<div style="left:613px;top:208px;width:1px;height:19px;background:#555555;"></div>
<div class="t" style="left:614px;top:206.5px;height:20px;line-height:20px;font-size:11px;color:#c6c6c6;width:64px;text-align:center;">J</div>
<div style="left:677px;top:208px;width:1px;height:19px;background:#555555;"></div>
<div class="t" style="left:678px;top:206.5px;height:20px;line-height:20px;font-size:11px;color:#c6c6c6;width:64px;text-align:center;">K</div>
<div style="left:741px;top:208px;width:1px;height:19px;background:#555555;"></div>
<div class="t" style="left:742px;top:206.5px;height:20px;line-height:20px;font-size:11px;color:#c6c6c6;width:64px;text-align:center;">L</div>
<div style="left:805px;top:208px;width:1px;height:19px;background:#555555;"></div>
<div class="t" style="left:806px;top:206.5px;height:20px;line-height:20px;font-size:11px;color:#c6c6c6;width:64px;text-align:center;">M</div>
<div style="left:869px;top:208px;width:1px;height:19px;background:#555555;"></div>
<div style="left:870px;top:206px;width:64px;height:21px;background:#656565;border-bottom:1.7px solid #2a8050;"></div>
<div class="t" style="left:870px;top:206.5px;height:20px;line-height:20px;font-size:11px;color:#ffffff;width:64px;text-align:center;">N</div>
<div style="left:933px;top:208px;width:1px;height:19px;background:#555555;"></div>
<div class="t" style="left:934px;top:206.5px;height:20px;line-height:20px;font-size:11px;color:#c6c6c6;width:64px;text-align:center;">O</div>
<div style="left:997px;top:208px;width:1px;height:19px;background:#555555;"></div>
<div class="t" style="left:998px;top:206.5px;height:20px;line-height:20px;font-size:11px;color:#c6c6c6;width:64px;text-align:center;">P</div>
<div style="left:1061px;top:208px;width:1px;height:19px;background:#555555;"></div>
<div class="t" style="left:1062px;top:206.5px;height:20px;line-height:20px;font-size:11px;color:#c6c6c6;width:64px;text-align:center;">Q</div>
<div style="left:1125px;top:208px;width:1px;height:19px;background:#555555;"></div>
<div class="t" style="left:1126px;top:206.5px;height:20px;line-height:20px;font-size:11px;color:#c6c6c6;width:64px;text-align:center;">R</div>
<div style="left:1189px;top:208px;width:1px;height:19px;background:#555555;"></div>
<div class="t" style="left:1190px;top:206.5px;height:20px;line-height:20px;font-size:11px;color:#c6c6c6;width:64px;text-align:center;">S</div>
<div style="left:1253px;top:208px;width:1px;height:19px;background:#555555;"></div>
<div class="t" style="left:1254px;top:206.5px;height:20px;line-height:20px;font-size:11px;color:#c6c6c6;width:64px;text-align:center;">T</div>
<div style="left:1317px;top:208px;width:1px;height:19px;background:#555555;"></div>
<div style="left:25px;top:208px;width:1px;height:463px;background:#555555;"></div>
<div class="t" style="left:0px;top:227.5px;height:20px;line-height:20px;font-size:12px;color:#c6c6c6;width:25px;text-align:center;">1</div>
<div style="left:0px;top:246px;width:26px;height:1px;background:#5a5a5a;"></div>
<div class="t" style="left:0px;top:247.5px;height:20px;line-height:20px;font-size:12px;color:#c6c6c6;width:25px;text-align:center;">2</div>
<div style="left:0px;top:266px;width:26px;height:1px;background:#5a5a5a;"></div>
<div class="t" style="left:0px;top:267.5px;height:20px;line-height:20px;font-size:12px;color:#c6c6c6;width:25px;text-align:center;">3</div>
<div style="left:0px;top:286px;width:26px;height:1px;background:#5a5a5a;"></div>
<div class="t" style="left:0px;top:287.5px;height:20px;line-height:20px;font-size:12px;color:#c6c6c6;width:25px;text-align:center;">4</div>
<div style="left:0px;top:306px;width:26px;height:1px;background:#5a5a5a;"></div>
<div class="t" style="left:0px;top:307.5px;height:20px;line-height:20px;font-size:12px;color:#c6c6c6;width:25px;text-align:center;">5</div>
<div style="left:0px;top:326px;width:26px;height:1px;background:#5a5a5a;"></div>
<div class="t" style="left:0px;top:327.5px;height:20px;line-height:20px;font-size:12px;color:#c6c6c6;width:25px;text-align:center;">6</div>
<div style="left:0px;top:346px;width:26px;height:1px;background:#5a5a5a;"></div>
<div class="t" style="left:0px;top:347.5px;height:20px;line-height:20px;font-size:12px;color:#c6c6c6;width:25px;text-align:center;">7</div>
<div style="left:0px;top:366px;width:26px;height:1px;background:#5a5a5a;"></div>
<div class="t" style="left:0px;top:367.5px;height:20px;line-height:20px;font-size:12px;color:#c6c6c6;width:25px;text-align:center;">8</div>
<div style="left:0px;top:386px;width:26px;height:1px;background:#5a5a5a;"></div>
<div class="t" style="left:0px;top:387.5px;height:20px;line-height:20px;font-size:12px;color:#c6c6c6;width:25px;text-align:center;">9</div>
<div style="left:0px;top:406px;width:26px;height:1px;background:#5a5a5a;"></div>
<div class="t" style="left:0px;top:407.5px;height:20px;line-height:20px;font-size:12px;color:#c6c6c6;width:25px;text-align:center;">10</div>
<div style="left:0px;top:426px;width:26px;height:1px;background:#5a5a5a;"></div>
<div class="t" style="left:0px;top:427.5px;height:20px;line-height:20px;font-size:12px;color:#c6c6c6;width:25px;text-align:center;">11</div>
<div style="left:0px;top:446px;width:26px;height:1px;background:#5a5a5a;"></div>
<div class="t" style="left:0px;top:447.5px;height:20px;line-height:20px;font-size:12px;color:#c6c6c6;width:25px;text-align:center;">12</div>
<div style="left:0px;top:466px;width:26px;height:1px;background:#5a5a5a;"></div>
<div class="t" style="left:0px;top:467.5px;height:20px;line-height:20px;font-size:12px;color:#c6c6c6;width:25px;text-align:center;">13</div>
<div style="left:0px;top:486px;width:26px;height:1px;background:#5a5a5a;"></div>
<div style="left:0px;top:487px;width:26px;height:20px;background:#656565;border-right:2px solid #1f8a4c;"></div>
<div class="t" style="left:0px;top:487.5px;height:20px;line-height:20px;font-size:12px;color:#ffffff;width:25px;text-align:center;">14</div>
<div style="left:0px;top:506px;width:26px;height:1px;background:#5a5a5a;"></div>
<div class="t" style="left:0px;top:507.5px;height:20px;line-height:20px;font-size:12px;color:#c6c6c6;width:25px;text-align:center;">15</div>
<div style="left:0px;top:526px;width:26px;height:1px;background:#5a5a5a;"></div>
<div class="t" style="left:0px;top:527.5px;height:20px;line-height:20px;font-size:12px;color:#c6c6c6;width:25px;text-align:center;">16</div>
<div style="left:0px;top:546px;width:26px;height:1px;background:#5a5a5a;"></div>
<div class="t" style="left:0px;top:547.5px;height:20px;line-height:20px;font-size:12px;color:#c6c6c6;width:25px;text-align:center;">17</div>
<div style="left:0px;top:566px;width:26px;height:1px;background:#5a5a5a;"></div>
<div class="t" style="left:0px;top:567.5px;height:20px;line-height:20px;font-size:12px;color:#c6c6c6;width:25px;text-align:center;">18</div>
<div style="left:0px;top:586px;width:26px;height:1px;background:#5a5a5a;"></div>
<div class="t" style="left:0px;top:587.5px;height:20px;line-height:20px;font-size:12px;color:#c6c6c6;width:25px;text-align:center;">19</div>
<div style="left:0px;top:606px;width:26px;height:1px;background:#5a5a5a;"></div>
<div class="t" style="left:0px;top:607.5px;height:20px;line-height:20px;font-size:12px;color:#c6c6c6;width:25px;text-align:center;">20</div>
<div style="left:0px;top:626px;width:26px;height:1px;background:#5a5a5a;"></div>
<div class="t" style="left:0px;top:627.5px;height:20px;line-height:20px;font-size:12px;color:#c6c6c6;width:25px;text-align:center;">21</div>
<div style="left:0px;top:646px;width:26px;height:1px;background:#5a5a5a;"></div>
<div class="t" style="left:0px;top:647.5px;height:20px;line-height:20px;font-size:12px;color:#c6c6c6;width:25px;text-align:center;">22</div>
<div style="left:0px;top:666px;width:26px;height:1px;background:#5a5a5a;"></div>
<div style="left:0px;top:686px;width:26px;height:1px;background:#5a5a5a;"></div>
<div style="left:89px;top:227px;width:1px;height:444px;background:#cecece;"></div>
<div style="left:153px;top:227px;width:1px;height:444px;background:#cecece;"></div>
<div style="left:217px;top:227px;width:1px;height:444px;background:#cecece;"></div>
<div style="left:281px;top:227px;width:1px;height:444px;background:#cecece;"></div>
<div style="left:345px;top:227px;width:1px;height:444px;background:#cecece;"></div>
<div style="left:409px;top:227px;width:1px;height:444px;background:#cecece;"></div>
<div style="left:485px;top:227px;width:1px;height:444px;background:#cecece;"></div>
<div style="left:549px;top:227px;width:1px;height:444px;background:#cecece;"></div>
<div style="left:613px;top:227px;width:1px;height:444px;background:#cecece;"></div>
<div style="left:677px;top:227px;width:1px;height:444px;background:#cecece;"></div>
<div style="left:741px;top:227px;width:1px;height:444px;background:#cecece;"></div>
<div style="left:805px;top:227px;width:1px;height:444px;background:#cecece;"></div>
<div style="left:869px;top:227px;width:1px;height:444px;background:#cecece;"></div>
<div style="left:933px;top:227px;width:1px;height:444px;background:#cecece;"></div>
<div style="left:997px;top:227px;width:1px;height:444px;background:#cecece;"></div>
<div style="left:1061px;top:227px;width:1px;height:444px;background:#cecece;"></div>
<div style="left:1125px;top:227px;width:1px;height:444px;background:#cecece;"></div>
<div style="left:1189px;top:227px;width:1px;height:444px;background:#cecece;"></div>
<div style="left:1253px;top:227px;width:1px;height:444px;background:#cecece;"></div>
<div style="left:1317px;top:227px;width:1px;height:444px;background:#cecece;"></div>
<div style="left:26px;top:246px;width:1319px;height:1px;background:#cecece;"></div>
<div style="left:26px;top:266px;width:1319px;height:1px;background:#cecece;"></div>
<div style="left:26px;top:286px;width:1319px;height:1px;background:#cecece;"></div>
<div style="left:26px;top:306px;width:1319px;height:1px;background:#cecece;"></div>
<div style="left:26px;top:326px;width:1319px;height:1px;background:#cecece;"></div>
<div style="left:26px;top:346px;width:1319px;height:1px;background:#cecece;"></div>
<div style="left:26px;top:366px;width:1319px;height:1px;background:#cecece;"></div>
<div style="left:26px;top:386px;width:1319px;height:1px;background:#cecece;"></div>
<div style="left:26px;top:406px;width:1319px;height:1px;background:#cecece;"></div>
<div style="left:26px;top:426px;width:1319px;height:1px;background:#cecece;"></div>
<div style="left:26px;top:446px;width:1319px;height:1px;background:#cecece;"></div>
<div style="left:26px;top:466px;width:1319px;height:1px;background:#cecece;"></div>
<div style="left:26px;top:486px;width:1319px;height:1px;background:#cecece;"></div>
<div style="left:26px;top:506px;width:1319px;height:1px;background:#cecece;"></div>
<div style="left:26px;top:526px;width:1319px;height:1px;background:#cecece;"></div>
<div style="left:26px;top:546px;width:1319px;height:1px;background:#cecece;"></div>
<div style="left:26px;top:566px;width:1319px;height:1px;background:#cecece;"></div>
<div style="left:26px;top:586px;width:1319px;height:1px;background:#cecece;"></div>
<div style="left:26px;top:606px;width:1319px;height:1px;background:#cecece;"></div>
<div style="left:26px;top:626px;width:1319px;height:1px;background:#cecece;"></div>
<div style="left:26px;top:646px;width:1319px;height:1px;background:#cecece;"></div>
<div style="left:26px;top:666px;width:1319px;height:1px;background:#cecece;"></div>
<div style="left:217px;top:246px;width:65px;height:21px;background:#ffff00;"></div>
<div style="left:409px;top:246px;width:77px;height:21px;background:#ffff00;"></div>
<div style="left:549px;top:246px;width:65px;height:21px;background:#ffff00;"></div>
<div class="c" style="left:157px;top:247.5px;width:57px;text-align:left;font-family:&quot;Liberation Sans&quot;,&quot;Noto Sans CJK JP&quot;,sans-serif;font-size:13px;">ประเภท</div>
<div class="c" style="left:221px;top:247.5px;width:57px;text-align:left;">IN</div>
<div class="c" style="left:349px;top:247.5px;width:57px;text-align:left;font-family:&quot;Liberation Sans&quot;,&quot;Noto Sans CJK JP&quot;,sans-serif;font-size:13px;">ช่วงเวลา</div>
<div class="c" style="left:413px;top:247.5px;width:69px;text-align:center;">6/9/2022</div>
<div class="c" style="left:489px;top:247.5px;width:57px;text-align:left;font-family:&quot;Liberation Sans&quot;,&quot;Noto Sans CJK JP&quot;,sans-serif;font-size:13px;">จาก</div>
<div class="c" style="left:681px;top:247.5px;width:57px;text-align:left;">IN</div>
<div class="c" style="left:681px;top:267.5px;width:57px;text-align:left;font-size:12.4px;">OUT</div>
<div class="c" style="left:681px;top:287.5px;width:57px;text-align:left;font-size:12.2px;">BOTH</div>
<div class="c" style="left:29px;top:287.5px;width:57px;text-align:left;">Row</div>
<div class="c" style="left:93px;top:287.5px;width:57px;text-align:left;">Date</div>
<div class="c" style="left:157px;top:287.5px;width:57px;text-align:left;">ID</div>
<div class="c" style="left:221px;top:287.5px;width:57px;text-align:left;">Product</div>
<div class="c" style="left:285px;top:287.5px;width:57px;text-align:left;">Type</div>
<div class="c" style="left:349px;top:287.5px;width:57px;text-align:left;">Units</div>
<div class="c" style="left:29px;top:307.5px;width:57px;text-align:right;">2</div>
<div class="c" style="left:93px;top:307.5px;width:57px;text-align:right;">6/9/2022</div>
<div class="c" style="left:157px;top:307.5px;width:57px;text-align:left;">M000002</div>
<div class="c" style="left:29px;top:327.5px;width:57px;text-align:right;">3</div>
<div class="c" style="left:93px;top:327.5px;width:57px;text-align:right;">6/9/2022</div>
<div class="c" style="left:157px;top:327.5px;width:57px;text-align:left;">M000003</div>
<div class="c" style="left:29px;top:347.5px;width:57px;text-align:right;">4</div>
<div class="c" style="left:93px;top:347.5px;width:57px;text-align:right;">6/9/2022</div>
<div class="c" style="left:157px;top:347.5px;width:57px;text-align:left;">M000004</div>
<div class="c" style="left:29px;top:367.5px;width:57px;text-align:right;">5</div>
<div class="c" style="left:93px;top:367.5px;width:57px;text-align:right;">6/9/2022</div>
<div class="c" style="left:157px;top:367.5px;width:57px;text-align:left;">M000005</div>
<div class="c" style="left:29px;top:387.5px;width:57px;text-align:right;">6</div>
<div class="c" style="left:93px;top:387.5px;width:57px;text-align:right;">7/9/2022</div>
<div class="c" style="left:157px;top:387.5px;width:57px;text-align:left;">M000001</div>
<div class="c" style="left:29px;top:407.5px;width:57px;text-align:center;">#NUM!</div>
<div class="c" style="left:93px;top:407.5px;width:57px;text-align:center;font-size:12.1px;">FALSE</div>
<div class="c" style="left:157px;top:407.5px;width:57px;text-align:center;">#NUM!</div>
<svg style="left:26px;top:407px;" width="7" height="7" viewBox="0 0 7 7"><path d="M0 0h6.5L0 6.5z" fill="#1f8a4c"/></svg>
<svg style="left:154px;top:407px;" width="7" height="7" viewBox="0 0 7 7"><path d="M0 0h6.5L0 6.5z" fill="#1f8a4c"/></svg>
<div class="c" style="left:29px;top:427.5px;width:57px;text-align:center;">#NUM!</div>
<div class="c" style="left:93px;top:427.5px;width:57px;text-align:center;font-size:12.1px;">FALSE</div>
<div class="c" style="left:157px;top:427.5px;width:57px;text-align:center;">#NUM!</div>
<svg style="left:26px;top:427px;" width="7" height="7" viewBox="0 0 7 7"><path d="M0 0h6.5L0 6.5z" fill="#1f8a4c"/></svg>
<svg style="left:154px;top:427px;" width="7" height="7" viewBox="0 0 7 7"><path d="M0 0h6.5L0 6.5z" fill="#1f8a4c"/></svg>
<div class="c" style="left:29px;top:447.5px;width:57px;text-align:center;">#NUM!</div>
<div class="c" style="left:93px;top:447.5px;width:57px;text-align:center;font-size:12.1px;">FALSE</div>
<div class="c" style="left:157px;top:447.5px;width:57px;text-align:center;">#NUM!</div>
<svg style="left:26px;top:447px;" width="7" height="7" viewBox="0 0 7 7"><path d="M0 0h6.5L0 6.5z" fill="#1f8a4c"/></svg>
<svg style="left:154px;top:447px;" width="7" height="7" viewBox="0 0 7 7"><path d="M0 0h6.5L0 6.5z" fill="#1f8a4c"/></svg>
<div class="c" style="left:29px;top:467.5px;width:57px;text-align:center;">#NUM!</div>
<div class="c" style="left:93px;top:467.5px;width:57px;text-align:center;font-size:12.1px;">FALSE</div>
<div class="c" style="left:157px;top:467.5px;width:57px;text-align:center;">#NUM!</div>
<svg style="left:26px;top:467px;" width="7" height="7" viewBox="0 0 7 7"><path d="M0 0h6.5L0 6.5z" fill="#1f8a4c"/></svg>
<svg style="left:154px;top:467px;" width="7" height="7" viewBox="0 0 7 7"><path d="M0 0h6.5L0 6.5z" fill="#1f8a4c"/></svg>
<div class="c" style="left:29px;top:487.5px;width:57px;text-align:center;">#NUM!</div>
<div class="c" style="left:93px;top:487.5px;width:57px;text-align:center;font-size:12.1px;">FALSE</div>
<div class="c" style="left:157px;top:487.5px;width:57px;text-align:center;">#NUM!</div>
<svg style="left:26px;top:487px;" width="7" height="7" viewBox="0 0 7 7"><path d="M0 0h6.5L0 6.5z" fill="#1f8a4c"/></svg>
<svg style="left:154px;top:487px;" width="7" height="7" viewBox="0 0 7 7"><path d="M0 0h6.5L0 6.5z" fill="#1f8a4c"/></svg>
<div class="c" style="left:29px;top:507.5px;width:57px;text-align:center;">#NUM!</div>
<div class="c" style="left:93px;top:507.5px;width:57px;text-align:center;font-size:12.1px;">FALSE</div>
<div class="c" style="left:157px;top:507.5px;width:57px;text-align:center;">#NUM!</div>
<svg style="left:26px;top:507px;" width="7" height="7" viewBox="0 0 7 7"><path d="M0 0h6.5L0 6.5z" fill="#1f8a4c"/></svg>
<svg style="left:154px;top:507px;" width="7" height="7" viewBox="0 0 7 7"><path d="M0 0h6.5L0 6.5z" fill="#1f8a4c"/></svg>
<div class="c" style="left:29px;top:527.5px;width:57px;text-align:center;">#NUM!</div>
<div class="c" style="left:93px;top:527.5px;width:57px;text-align:center;font-size:12.1px;">FALSE</div>
<div class="c" style="left:157px;top:527.5px;width:57px;text-align:center;">#NUM!</div>
<svg style="left:26px;top:527px;" width="7" height="7" viewBox="0 0 7 7"><path d="M0 0h6.5L0 6.5z" fill="#1f8a4c"/></svg>
<svg style="left:154px;top:527px;" width="7" height="7" viewBox="0 0 7 7"><path d="M0 0h6.5L0 6.5z" fill="#1f8a4c"/></svg>
<div class="c" style="left:29px;top:547.5px;width:57px;text-align:center;">#NUM!</div>
<div class="c" style="left:93px;top:547.5px;width:57px;text-align:center;font-size:12.1px;">FALSE</div>
<div class="c" style="left:157px;top:547.5px;width:57px;text-align:center;">#NUM!</div>
<svg style="left:26px;top:547px;" width="7" height="7" viewBox="0 0 7 7"><path d="M0 0h6.5L0 6.5z" fill="#1f8a4c"/></svg>
<svg style="left:154px;top:547px;" width="7" height="7" viewBox="0 0 7 7"><path d="M0 0h6.5L0 6.5z" fill="#1f8a4c"/></svg>
<div class="c" style="left:29px;top:567.5px;width:57px;text-align:center;">#NUM!</div>
<div class="c" style="left:93px;top:567.5px;width:57px;text-align:center;font-size:12.1px;">FALSE</div>
<div class="c" style="left:157px;top:567.5px;width:57px;text-align:center;">#NUM!</div>
<svg style="left:26px;top:567px;" width="7" height="7" viewBox="0 0 7 7"><path d="M0 0h6.5L0 6.5z" fill="#1f8a4c"/></svg>
<svg style="left:154px;top:567px;" width="7" height="7" viewBox="0 0 7 7"><path d="M0 0h6.5L0 6.5z" fill="#1f8a4c"/></svg>
<div style="left:868px;top:485px;width:67px;height:23px;border:2px solid #217346;"></div>
<div style="left:930px;top:503px;width:6px;height:6px;background:#217346;border:1px solid #fff;"></div>
<div style="left:213.4px;top:237.3px;width:76.9px;height:39.30000000000001px;border:5.1px solid #ed1c24;"></div>
<div style="left:403px;top:235.3px;width:90.5px;height:37.89999999999998px;border:5.1px solid #ed1c24;"></div>
<div style="left:537.9px;top:232.2px;width:90.5px;height:42.400000000000034px;border:5.1px solid #ed1c24;"></div>
<div style="left:24.4px;top:285.5px;width:385.0px;height:310.1px;border:4.9px solid #22b14c;"></div>
<svg style="left:29.4px;top:407px;" width="7" height="7" viewBox="0 0 7 7"><path d="M0 0h6L0 6z" fill="#1f8a4c"/></svg>
<svg style="left:29.4px;top:427px;" width="7" height="7" viewBox="0 0 7 7"><path d="M0 0h6L0 6z" fill="#1f8a4c"/></svg>
<svg style="left:29.4px;top:447px;" width="7" height="7" viewBox="0 0 7 7"><path d="M0 0h6L0 6z" fill="#1f8a4c"/></svg>
<svg style="left:29.4px;top:467px;" width="7" height="7" viewBox="0 0 7 7"><path d="M0 0h6L0 6z" fill="#1f8a4c"/></svg>
<svg style="left:29.4px;top:487px;" width="7" height="7" viewBox="0 0 7 7"><path d="M0 0h6L0 6z" fill="#1f8a4c"/></svg>
<svg style="left:29.4px;top:507px;" width="7" height="7" viewBox="0 0 7 7"><path d="M0 0h6L0 6z" fill="#1f8a4c"/></svg>
<svg style="left:29.4px;top:527px;" width="7" height="7" viewBox="0 0 7 7"><path d="M0 0h6L0 6z" fill="#1f8a4c"/></svg>
<svg style="left:29.4px;top:547px;" width="7" height="7" viewBox="0 0 7 7"><path d="M0 0h6L0 6z" fill="#1f8a4c"/></svg>
<svg style="left:29.4px;top:567px;" width="7" height="7" viewBox="0 0 7 7"><path d="M0 0h6L0 6z" fill="#1f8a4c"/></svg>
<div style="left:1348px;top:208px;width:16px;height:16px;background:#4d4d4d;border:1px solid #5e5e5e;"></div>
<svg style="left:1352px;top:213px;" width="8" height="6" viewBox="0 0 8 6"><path d="M4 0.5L7.8 5.5H0.2z" fill="#f0f0f0"/></svg>
<div style="left:1348px;top:227px;width:16px;height:410px;background:#4d4d4d;border:1px solid #5e5e5e;"></div>
<div style="left:1348px;top:637px;width:16px;height:19px;background:#353535;"></div>
<div style="left:1348px;top:656px;width:16px;height:15px;background:#4d4d4d;border:1px solid #5e5e5e;"></div>
<svg style="left:1352px;top:660px;" width="8" height="6" viewBox="0 0 8 6"><path d="M4 5.5L7.8 0.5H0.2z" fill="#f0f0f0"/></svg>
<div style="left:0px;top:671px;width:1366px;height:27px;background:#202020;"></div>
<svg style="left:26px;top:680px;" width="7" height="9" viewBox="0 0 7 9"><path d="M6.5 0.5v8L0.5 4.5z" fill="#9a9a9a"/></svg>
<svg style="left:55px;top:680px;" width="7" height="9" viewBox="0 0 7 9"><path d="M0.5 0.5v8l6-4z" fill="#9a9a9a"/></svg>
<div style="left:100px;top:673px;width:1.3px;height:22px;background:#808080;"></div>
<div class="t" style="left:100px;top:674px;height:20px;line-height:20px;font-size:12.6px;color:#e6e6e6;width:80px;text-align:center;">Overview</div>
<div style="left:181px;top:673px;width:1.3px;height:22px;background:#808080;"></div>
<div style="left:183.6px;top:672.7px;width:77.6px;height:21.8px;background:#ffc000;"></div>
<div class="t" style="left:183.6px;top:674px;height:20px;line-height:20px;font-size:12.6px;color:#1a1200;width:77.6px;text-align:center;">items-list</div>
<div style="left:263px;top:673px;width:1.3px;height:22px;background:#808080;"></div>
<div style="left:265.5px;top:672.7px;width:32.0px;height:21.8px;background:#92d050;"></div>
<div class="t" style="left:265.5px;top:674px;height:20px;line-height:20px;font-size:12.6px;color:#101800;width:32.0px;text-align:center;">In</div>
<div style="left:299.5px;top:673px;width:1.3px;height:22px;background:#808080;"></div>
<div style="left:301.8px;top:672.7px;width:41.80000000000001px;height:21.8px;background:#ff0000;"></div>
<div class="t" style="left:301.8px;top:674px;height:20px;line-height:20px;font-size:12.6px;color:#ffffff;width:41.80000000000001px;text-align:center;">Out</div>
<div style="left:347.9px;top:672.7px;width:53.400000000000034px;height:21.8px;background:#0070c0;"></div>
<div class="t" style="left:347.9px;top:674px;height:20px;line-height:20px;font-size:12.6px;color:#ffffff;width:53.400000000000034px;text-align:center;">Stock</div>
<div style="left:403.4px;top:670.2px;width:72.6px;height:23.6px;background:#ffffff;border-bottom:2.5px solid #217346;"></div>
<div class="t" style="left:403.4px;top:673.5px;height:20px;line-height:20px;font-size:12.4px;color:#217346;width:72.6px;text-align:center;font-weight:bold;">Check-h</div>
<svg style="left:508px;top:676px;" width="17" height="17" viewBox="0 0 17 17"><circle cx="8.5" cy="8.5" r="7.6" fill="none" stroke="#e0e0e0" stroke-width="1.3"/><path d="M8.5 4.5v8M4.5 8.5h8" stroke="#e0e0e0" stroke-width="1.4"/></svg>
<div style="left:818.5px;top:679px;width:2.2px;height:2.2px;background:#e0e0e0;"></div>
<div style="left:818.5px;top:683.5px;width:2.2px;height:2.2px;background:#e0e0e0;"></div>
<div style="left:818.5px;top:688px;width:2.2px;height:2.2px;background:#e0e0e0;"></div>
<div style="left:835.4px;top:678.2px;width:15px;height:15.2px;background:#4d4d4d;border:1px solid #5e5e5e;"></div>
<svg style="left:840px;top:682px;" width="6" height="8" viewBox="0 0 6 8"><path d="M5.5 0.5v7L0.5 4z" fill="#f0f0f0"/></svg>
<div style="left:851.3px;top:678.2px;width:453.2px;height:15.2px;background:#4d4d4d;border:1px solid #5e5e5e;"></div>
<div style="left:1329.7px;top:678.2px;width:15px;height:15.2px;background:#4d4d4d;border:1px solid #5e5e5e;"></div>
<svg style="left:1334.5px;top:682px;" width="6" height="8" viewBox="0 0 6 8"><path d="M0.5 0.5v7l5-3.5z" fill="#f0f0f0"/></svg>
<div class="t" style="left:1073px;top:644.5px;height:20px;line-height:20px;font-size:19.9px;color:rgba(150,150,150,0.7);">Activate Windows</div>
<div class="t" style="left:1073px;top:668px;height:20px;line-height:20px;font-size:14.85px;color:rgba(160,160,160,0.8);">Go to Settings to activate Windows.</div>
<div style="left:0px;top:698px;width:1366px;height:22px;background:#303030;"></div>
<div class="t" style="left:8px;top:699px;height:20px;line-height:20px;font-size:11.3px;color:#e6e6e6;">Ready</div>
<svg style="left:58px;top:702.5px;" width="14" height="14" viewBox="0 0 14 14"><rect x="0.6" y="0.6" width="12.8" height="10" fill="none" stroke="#d0d0d0" stroke-width="1.1"/><path d="M0.6 4h12.8M4.5 4v6.6" stroke="#d0d0d0" stroke-width="1"/><circle cx="9" cy="10" r="3.2" fill="#303030" stroke="#d0d0d0" stroke-width="1.1"/></svg>
<div style="left:1065px;top:698px;width:40.5px;height:22px;background:#5c5c5c;"></div>
<svg style="left:1077px;top:702.5px;" width="16" height="14" viewBox="0 0 16 14"><rect x="0.6" y="0.6" width="14.8" height="12.8" fill="none" stroke="#f0f0f0" stroke-width="1.2"/><path d="M0.6 5h14.8M0.6 9h14.8M5.5 0.6v12.8M10.5 0.6v12.8" stroke="#f0f0f0" stroke-width="1.1"/></svg>
<svg style="left:1117px;top:702.5px;" width="16" height="14" viewBox="0 0 16 14"><rect x="0.6" y="0.6" width="14.8" height="12.8" fill="none" stroke="#e0e0e0" stroke-width="1.2"/><rect x="4" y="3.5" width="8" height="7.5" fill="none" stroke="#e0e0e0" stroke-width="1.1"/></svg>
<svg style="left:1157px;top:702.5px;" width="16" height="14" viewBox="0 0 16 14"><path d="M0.6 13.4V5.5h4.5V0.6h10.3v12.8z" fill="none" stroke="#e0e0e0" stroke-width="1.3"/><path d="M5.1 5.5h5.5v-4.9" fill="none" stroke="#e0e0e0" stroke-width="1.2"/></svg>
<div style="left:1190px;top:708.5px;width:10px;height:1.3px;background:#9a9a9a;"></div>
<div style="left:1205.5px;top:708.7px;width:99px;height:1px;background:#c8c8c8;"></div>
<div style="left:1253px;top:702.5px;width:4px;height:13px;background:#f0f0f0;"></div>
<div style="left:1308.5px;top:708.5px;width:11px;height:1.3px;background:#9a9a9a;"></div>
<div style="left:1313.4px;top:703.5px;width:1.3px;height:11px;background:#9a9a9a;"></div>
<div class="t" style="left:1300px;top:699px;height:20px;line-height:20px;font-size:11.3px;color:#e6e6e6;width:58px;text-align:right;">100%</div>
<div style="left:0px;top:720px;width:1370px;height:52px;background:#f3f3f3;"></div>
<svg style="left:539.5px;top:732.5px;" width="24" height="24" viewBox="0 0 24 24"><defs><linearGradient id="wg" x1="0" y1="0" x2="1" y2="1"><stop offset="0" stop-color="#5fd0f7"/><stop offset="1" stop-color="#0a78d4"/></linearGradient></defs><rect x="0" y="0" width="11.3" height="11.3" fill="url(#wg)"/><rect x="12.7" y="0" width="11.3" height="11.3" fill="url(#wg)"/><rect x="0" y="12.7" width="11.3" height="11.3" fill="url(#wg)"/><rect x="12.7" y="12.7" width="11.3" height="11.3" fill="url(#wg)"/></svg>
<svg style="left:584px;top:732.5px;" width="24" height="24" viewBox="0 0 24 24"><defs><linearGradient id="eg" x1="0" y1="0" x2="1" y2="1"><stop offset="0" stop-color="#35c1f1"/><stop offset="1" stop-color="#0c59a4"/></linearGradient></defs><circle cx="12" cy="12" r="12" fill="url(#eg)"/><path d="M4 16c-1-6 4-10 9-9 4 1 6 4 5 7h-9c0 4 5 6 10 4-3 5-13 5-15-2z" fill="#e9f7fd" opacity="0.9"/><path d="M2 9C5 2 14 0 20 5c3 3 3 7 1 9-1-5-6-8-11-7-4 1-7 2-8 2z" fill="#4fd56b" opacity="0.85"/></svg>
<svg style="left:628px;top:734px;" width="25" height="22" viewBox="0 0 25 22"><path d="M0 3c0-1 .8-2 2-2h7l3 3h11c1 0 2 1 2 2v3H0z" fill="#f2b200"/><rect x="0" y="6" width="25" height="15" rx="1.5" fill="#ffd75e"/><rect x="5" y="14" width="15" height="7" fill="#2b8be0"/></svg>
<svg style="left:672px;top:732px;" width="24" height="25" viewBox="0 0 24 25"><path d="M7 7V4.5a5 4 0 0 1 10 0V7" fill="none" stroke="#3a6ea5" stroke-width="2"/><rect x="0.5" y="6.5" width="23" height="18" rx="3" fill="#173a6b"/><rect x="6.5" y="10.5" width="4.6" height="4.6" fill="#f25022"/><rect x="12.7" y="10.5" width="4.6" height="4.6" fill="#7fba00"/><rect x="6.5" y="16.5" width="4.6" height="4.6" fill="#00a4ef"/><rect x="12.7" y="16.5" width="4.6" height="4.6" fill="#ffb900"/></svg>
<div style="left:715.4px;top:732.5px;width:24px;height:24px;background:#1677c7;"></div>
<div class="t" style="left:715.4px;top:735px;height:20px;line-height:20px;font-size:21px;color:#ffffff;width:24px;text-align:center;font-weight:bold;">L</div>
<svg style="left:760px;top:733px;" width="23" height="23" viewBox="0 0 23 23"><circle cx="11.5" cy="11.5" r="11.5" fill="#e33b2e"/><path d="M11.5 11.5L1.6 5.8A11.5 11.5 0 0 0 11 23z" fill="#2da94f"/><path d="M11.5 11.5L11 23A11.5 11.5 0 0 0 21.4 5.8z" fill="#fcc31e"/><path d="M1.6 5.8A11.5 11.5 0 0 1 21.4 5.8L11.5 6z" fill="#e33b2e"/><circle cx="11.5" cy="11.5" r="5.4" fill="#fff"/><circle cx="11.5" cy="11.5" r="4.2" fill="#4285f4"/></svg>
<div style="left:769px;top:760.5px;width:5px;height:3px;background:#8a8a8a;border-radius:2px;"></div>
<div style="left:797.5px;top:724px;width:38px;height:40px;background:#fbfbfc;border-radius:5px;border:1px solid #e2e2e2;"></div>
<svg style="left:804px;top:733px;" width="25" height="23" viewBox="0 0 25 23"><rect x="7" y="0" width="18" height="23" rx="2" fill="#21a366"/><rect x="16" y="0" width="9" height="7.6" fill="#33c481"/><rect x="16" y="7.6" width="9" height="7.7" fill="#107c41"/><rect x="7" y="7.6" width="9" height="7.7" fill="#185c37"/><rect x="7" y="15.3" width="18" height="7.7" rx="2" fill="#185c37"/><rect x="0" y="5" width="13.5" height="13.5" rx="1.5" fill="#107c41"/><path d="M3.6 8.2l6.3 7.2M9.9 8.2l-6.3 7.2" stroke="#fff" stroke-width="1.7"/></svg>
<div style="left:808.5px;top:761px;width:16px;height:3px;background:#1577d3;border-radius:2px;"></div>
<svg style="left:1150px;top:740px;" width="14" height="8" viewBox="0 0 14 8"><path d="M1 7l6-6 6 6" fill="none" stroke="#2a2a2a" stroke-width="1.5"/></svg>
<div class="t" style="left:1181px;top:735.5px;height:20px;line-height:20px;font-size:12.5px;color:#1a1a1a;">ไทย</div>
<svg style="left:1218px;top:736px;" width="21" height="16" viewBox="0 0 21 16"><path d="M1 6a13.5 13.5 0 0 1 19 0" fill="none" stroke="#2a2a2a" stroke-width="1.4"/><path d="M4 9.3a9.3 9.3 0 0 1 13 0" fill="none" stroke="#2a2a2a" stroke-width="1.4"/><path d="M7 12.4a5 5 0 0 1 7 0" fill="none" stroke="#2a2a2a" stroke-width="1.4"/><circle cx="10.5" cy="14.5" r="1.3" fill="#2a2a2a"/></svg>
<svg style="left:1243px;top:737px;" width="20" height="15" viewBox="0 0 20 15"><path d="M1 5h3.5L9 1v13L4.5 10H1z" fill="none" stroke="#2a2a2a" stroke-width="1.3"/><path d="M12.5 4.5l6 6M18.5 4.5l-6 6" stroke="#2a2a2a" stroke-width="1.3"/></svg>
<svg style="left:1268px;top:739.5px;" width="21" height="11" viewBox="0 0 21 11"><rect x="0.7" y="0.7" width="16.6" height="9.6" rx="2" fill="none" stroke="#2a2a2a" stroke-width="1.3"/><rect x="2.4" y="2.4" width="10" height="6.2" rx="1" fill="#2a2a2a"/><path d="M18.8 3.8v3.4" stroke="#2a2a2a" stroke-width="1.6"/></svg>
<div class="t" style="left:1270px;top:726px;height:20px;line-height:20px;font-size:12px;color:#1a1a1a;width:81px;text-align:right;">14:03</div>
<div class="t" style="left:1270px;top:742.5px;height:20px;line-height:20px;font-size:12px;color:#1a1a1a;width:81px;text-align:right;">7/9/2565</div>
</div>
</body></html>
